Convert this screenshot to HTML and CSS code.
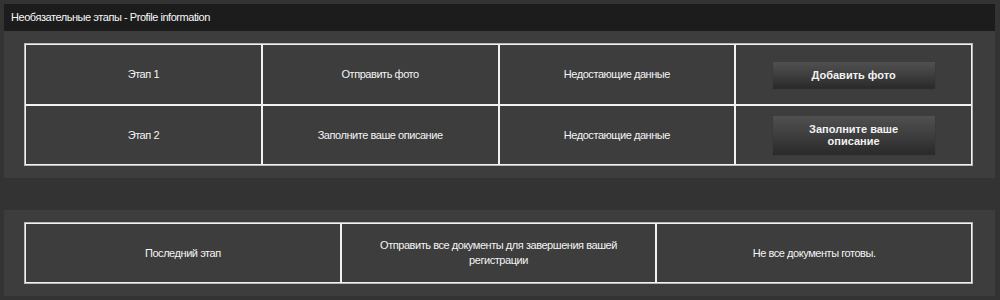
FILE: index.html
```html
<!DOCTYPE html>
<html>
<head>
<meta charset="utf-8">
<link rel="stylesheet" href="styles.css">
</head>
<body>
<div class="page">
  <section class="panel">
    <div class="panel-head">Необязательные этапы - Profile information</div>
    <div class="panel-body">
      <table class="steps cols4">
        <tr class="row-a">
          <td>Этап 1</td>
          <td>Отправить фото</td>
          <td>Недостающие данные</td>
          <td><button class="btn">Добавить фото</button></td>
        </tr>
        <tr class="row-b">
          <td>Этап 2</td>
          <td>Заполните ваше описание</td>
          <td>Недостающие данные</td>
          <td><button class="btn">Заполните ваше<br>описание</button></td>
        </tr>
      </table>
    </div>
  </section>
  <section class="panel panel-second">
    <div class="panel-body">
      <table class="steps cols3">
        <tr class="row-c">
          <td>Последний этап</td>
          <td class="wrap">Отправить все документы для завершения вашей регистрации</td>
          <td>Не все документы готовы.</td>
        </tr>
      </table>
    </div>
  </section>
</div>
</body>
</html>
```

FILE: styles.css
```css
html, body {
  margin: 0;
  padding: 0;
  background: #333333;
  height: 100%;
}
body {
  font-family: "Liberation Sans", Arial, sans-serif;
  font-size: 11px;
  letter-spacing: -0.45px;
  color: #f4f4f4;
}
.page {
  padding: 4px 5px 0 4px;
  width: 991px;
}
.panel {
  background: #3d3d3d;
}
.panel-second {
  margin-top: 32px;
}
.panel-head {
  background: #1c1c1c;
  color: #f8f8f8;
  height: 27px;
  line-height: 27px;
  padding-left: 7px;
}
.panel-body {
  padding: 12px 22px 12px 20px;
}
.steps {
  width: 949px;
  border-collapse: separate;
  border-spacing: 0;
  border: 1px solid #b8b8b8;
  table-layout: fixed;
}
.steps td {
  border: 1px solid #f2f2f2;
  text-align: center;
  vertical-align: middle;
  padding: 0 12px;
  line-height: 15px;
  color: #f4f4f4;
}
.row-a td { height: 59px; }
.row-b td { height: 58px; }
.row-c td { height: 58px; }
.btn {
  width: 162px;
  border: none;
  padding: 7px 0;
  font-family: "Liberation Sans", Arial, sans-serif;
  font-size: 11px;
  font-weight: bold;
  letter-spacing: 0;
  line-height: 12px;
  color: #f2f2f2;
  background: linear-gradient(to bottom, #505050 0%, #3e3e3e 50%, #2a2a2a 100%);
  box-shadow: 0 1px 1px rgba(0, 0, 0, 0.25);
  cursor: pointer;
  display: inline-block;
}
```
